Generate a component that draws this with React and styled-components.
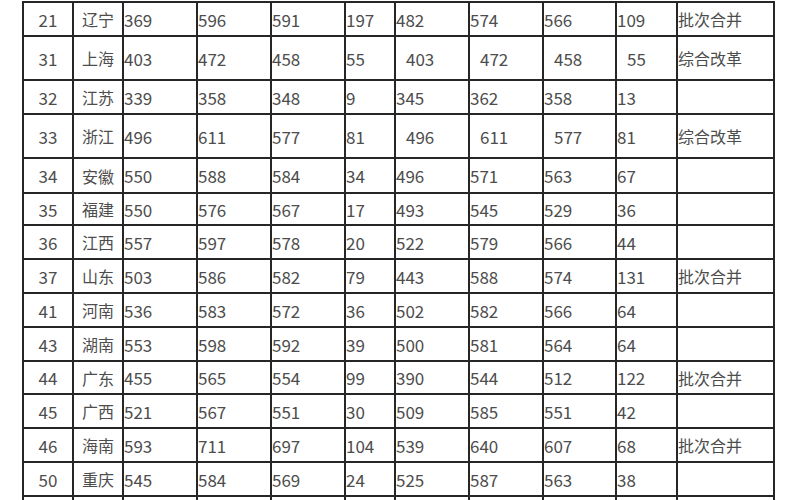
import React from "react";
import styled, { createGlobalStyle } from "styled-components";

const Global = createGlobalStyle`
  html, body { margin: 0; padding: 0; background: #fff; overflow: hidden; }
  body { width: 800px; height: 500px; }
`;

const Page = styled.div`
  width: 800px;
  height: 500px;
  overflow: hidden;
  background: #fff;
  padding: 1px 0 0 22px;
  box-sizing: border-box;
`;

const Sheet = styled.div`
  display: flex;
  flex-direction: column;
  gap: 2px;
  padding: 2px;
  width: max-content;
  background: #262626;
`;

const Row = styled.div`
  display: grid;
  grid-template-columns: 48px 48px 72px 72px 72px 48px 72px 72px 71px 59px 95px;
  gap: 2px;
  height: ${(p) => p.$h}px;
`;

const Cell = styled.div`
  background: #fff;
  display: flex;
  align-items: center;
  justify-content: ${(p) => (p.$center ? "center" : "flex-start")};
  padding-left: ${(p) => p.$indent || 0}px;
  font-family: "Noto Sans CJK SC", "Noto Sans", sans-serif;
  font-size: ${(p) => (p.$cjk ? 16 : 17)}px;
  color: #4d4d4d;
  white-space: nowrap;
  overflow: hidden;
`;

const rows = [
  { h: 32, d: ["21", "辽宁", "369", "596", "591", "197", "482", "574", "566", "109", "批次合并"] },
  { h: 42, d: ["31", "上海", "403", "472", "458", "55", "403", "472", "458", "55", "综合改革"], ind: [6, 7, 8, 9] },
  { h: 32, d: ["32", "江苏", "339", "358", "348", "9", "345", "362", "358", "13", ""] },
  { h: 42, d: ["33", "浙江", "496", "611", "577", "81", "496", "611", "577", "81", "综合改革"], ind: [6, 7, 8] },
  { h: 33, d: ["34", "安徽", "550", "588", "584", "34", "496", "571", "563", "67", ""] },
  { h: 30, d: ["35", "福建", "550", "576", "567", "17", "493", "545", "529", "36", ""] },
  { h: 32, d: ["36", "江西", "557", "597", "578", "20", "522", "579", "566", "44", ""] },
  { h: 32, d: ["37", "山东", "503", "586", "582", "79", "443", "588", "574", "131", "批次合并"] },
  { h: 32, d: ["41", "河南", "536", "583", "572", "36", "502", "582", "566", "64", ""] },
  { h: 32, d: ["43", "湖南", "553", "598", "592", "39", "500", "581", "564", "64", ""] },
  { h: 31, d: ["44", "广东", "455", "565", "554", "99", "390", "544", "512", "122", "批次合并"] },
  { h: 32, d: ["45", "广西", "521", "567", "551", "30", "509", "585", "551", "42", ""] },
  { h: 32, d: ["46", "海南", "593", "711", "697", "104", "539", "640", "607", "68", "批次合并"] },
  { h: 32, d: ["50", "重庆", "545", "584", "569", "24", "525", "587", "563", "38", ""] },
  { h: 32, d: ["", "", "", "", "", "", "", "", "", "", ""] },
];

export default function App() {
  return (
    <>
      <Global />
      <Page>
        <Sheet>
          {rows.map((r, i) => (
            <Row key={i} $h={r.h}>
              {r.d.map((v, j) => (
                <Cell
                  key={j}
                  $center={j < 2}
                  $cjk={j === 1 || j === 10}
                  $indent={r.ind && r.ind.includes(j) ? 10 : 0}
                >
                  {v}
                </Cell>
              ))}
            </Row>
          ))}
        </Sheet>
      </Page>
    </>
  );
}
